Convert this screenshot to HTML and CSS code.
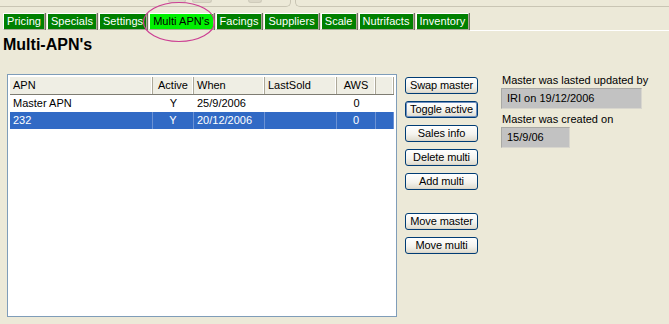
FILE: index.html
```html
<!DOCTYPE html>
<html>
<head>
<meta charset="utf-8">
<link rel="stylesheet" href="styles.css">
</head>
<body>
<div class="strip">
  <div class="panel panel-left">
    <span class="nub nub-a"></span>
    <span class="nub nub-b"></span>
    <span class="nub nub-c"></span>
  </div>
  <div class="panel panel-right"></div>
</div>
<nav class="tabs">
  <span class="tab">Pricing</span>
  <span class="tab">Specials</span>
  <span class="tab">Settings</span>
  <span class="tab tab-active">Multi APN's</span>
  <span class="tab">Facings</span>
  <span class="tab">Suppliers</span>
  <span class="tab">Scale</span>
  <span class="tab">Nutrifacts</span>
  <span class="tab">Inventory</span>
  <span class="tab-fill"></span>
</nav>
<svg class="circle" width="74" height="42" viewBox="0 0 74 42"><ellipse cx="37" cy="21" rx="35.5" ry="19.5" fill="none" stroke="#cc3f93" stroke-width="1.2"/></svg>
<h1 class="title">Multi-APN's</h1>
<main class="content">
  <div class="listbox">
    <div class="row row-head">
      <span class="cell">APN</span>
      <span class="cell center">Active</span>
      <span class="cell">When</span>
      <span class="cell">LastSold</span>
      <span class="cell center">AWS</span>
      <span class="cell"></span>
    </div>
    <div class="row">
      <span class="cell">Master APN</span>
      <span class="cell center">Y</span>
      <span class="cell">25/9/2006</span>
      <span class="cell"></span>
      <span class="cell center">0</span>
      <span class="cell"></span>
    </div>
    <div class="row row-sel">
      <span class="cell">232</span>
      <span class="cell center">Y</span>
      <span class="cell">20/12/2006</span>
      <span class="cell"></span>
      <span class="cell center">0</span>
      <span class="cell"></span>
    </div>
  </div>
  <div class="buttons">
    <button class="btn">Swap master</button>
    <button class="btn btn-focus">Toggle active</button>
    <button class="btn">Sales info</button>
    <button class="btn">Delete multi</button>
    <button class="btn">Add multi</button>
    <button class="btn btn-gap">Move master</button>
    <button class="btn">Move multi</button>
  </div>
  <div class="info">
    <div class="label">Master was lasted updated by</div>
    <div class="field field-wide">IRI on 19/12/2006</div>
    <div class="label">Master was created on</div>
    <div class="field field-narrow">15/9/06</div>
  </div>
</main>
</body>
</html>
```
FILE: styles.css
```css
* { box-sizing: border-box; }
html, body { margin: 0; padding: 0; }
body {
  width: 669px;
  height: 324px;
  overflow: hidden;
  background: #ece9d8;
  font-family: "Liberation Sans", Arial, sans-serif;
  font-size: 11px;
  color: #000;
  position: relative;
}
.strip {
  display: flex;
  height: 8px;
}
.panel {
  height: 7px;
  border-bottom: 1px solid #c9c5b4;
  position: relative;
}
.panel-left {
  width: 291px;
  border-right: 1px solid #c9c5b4;
  border-bottom-right-radius: 5px;
}
.panel-right {
  flex: 1;
  margin-left: 4px;
  border-left: 1px solid #c9c5b4;
  border-bottom-left-radius: 5px;
}
.nub {
  position: absolute;
  top: 0;
  height: 3px;
  background: #dcd8c8;
  border: 1px solid #cfcbbb;
  border-top: 0;
  border-radius: 0 0 3px 3px;
}
.nub-a { left: 168px; width: 18px; }
.nub-b { left: 192px; width: 20px; }
.nub-c { left: 248px; width: 14px; }

.tabs {
  display: flex;
  margin-top: 5px;
  height: 18px;
  padding-left: 3px;
}
.tab {
  height: 17px;
  line-height: 15px;
  padding: 0 3px;
  margin-right: 2px;
  background: #008000;
  color: #fff;
  border-top: 1px solid #fff;
  border-left: 1px solid #fff;
  border-right: 1px solid #aca899;
  border-bottom: 1px solid #aca899;
  box-shadow: 1px 0 0 #716f64;
  white-space: nowrap;
  letter-spacing: 0.05px;
}
.tab-active {
  background: #00f000;
  color: #000;
}
.tab-fill {
  flex: 1;
  margin-left: -1px;
  border-bottom: 1px solid #fff;
}
.circle {
  position: absolute;
  left: 142px;
  top: 1px;
}
.title {
  margin: 0;
  padding: 5px 0 0 3px;
  height: 43px;
  font-size: 16px;
  line-height: 18px;
  font-weight: bold;
}
.content {
  display: flex;
  align-items: flex-start;
  padding-left: 7px;
}
.listbox {
  width: 390px;
  height: 243px;
  border: 1px solid #7f9db9;
  background: #fff;
  padding: 2px;
}
.row {
  display: grid;
  grid-template-columns: 143px 41px 71px 72px 39px 18px;
  height: 17px;
  line-height: 17px;
}
.cell {
  padding-left: 3px;
  white-space: nowrap;
  overflow: hidden;
}
.center {
  text-align: center;
  padding-left: 0;
}
.row-head {
  height: 18px;
  background: #efeee4;
  border-bottom: 1px solid #7e7c72;
}
.row-head .cell {
  border-right: 1px solid #aca899;
  box-shadow: inset -1px 0 0 #fff;
  line-height: 17px;
}
.row-sel {
  background: #316ac5;
  color: #fff;
}
.row-sel .cell {
  border-right: 1px solid #6b92d4;
}
.buttons {
  display: flex;
  flex-direction: column;
  gap: 7px;
  margin-left: 8px;
  margin-top: 3px;
}
.btn {
  width: 73px;
  height: 17px;
  padding: 0;
  font-family: inherit;
  font-size: 11px;
  line-height: 15px;
  color: #000;
  border: 1px solid #003c74;
  border-radius: 3px;
  background: linear-gradient(#ffffff 0%, #f4f3ee 55%, #e3e0d4 90%, #d6d0c5 100%);
  letter-spacing: -0.1px;
}
.btn-focus {
  box-shadow: inset 0 0 0 1px #6f8fc0;
}
.btn-gap {
  margin-top: 16px;
}
.info {
  margin-left: 24px;
  margin-top: -1px;
  display: flex;
  flex-direction: column;
  align-items: flex-start;
}
.label {
  height: 14px;
  line-height: 14px;
  white-space: nowrap;
}
.field {
  height: 21px;
  line-height: 19px;
  margin: 1px 0 3px -1px;
  padding-left: 5px;
  background: #c2c2c2;
  border: 1px solid #a9a9a5;
  border-right-color: #d8d6ce;
  border-bottom-color: #d8d6ce;
}
.field-wide { width: 141px; }
.field-narrow { width: 69px; }
```
